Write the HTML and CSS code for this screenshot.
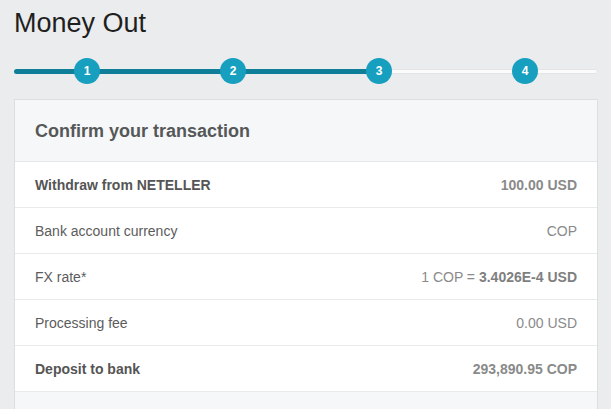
FILE: index.html
```html
<!DOCTYPE html>
<html lang="en">
<head>
  <meta charset="UTF-8">
  <title>Money Out</title>
  <link rel="stylesheet" href="styles.css">
</head>
<body>
  <div class="page">
    <h1 class="title">Money Out</h1>

    <div class="steps">
      <div class="track"><div class="track-fill"></div></div>
      <div class="step-list">
        <div class="step"><span class="dot">1</span></div>
        <div class="step"><span class="dot">2</span></div>
        <div class="step"><span class="dot">3</span></div>
        <div class="step"><span class="dot">4</span></div>
      </div>
    </div>

    <div class="card">
      <div class="card-header">Confirm your transaction</div>
      <div class="row strong">
        <span class="label">Withdraw from NETELLER</span>
        <span class="value">100.00 USD</span>
      </div>
      <div class="row">
        <span class="label">Bank account currency</span>
        <span class="value">COP</span>
      </div>
      <div class="row">
        <span class="label">FX rate*</span>
        <span class="value">1 COP = <b>3.4026E-4 USD</b></span>
      </div>
      <div class="row">
        <span class="label">Processing fee</span>
        <span class="value">0.00 USD</span>
      </div>
      <div class="row strong">
        <span class="label">Deposit to bank</span>
        <span class="value">293,890.95 COP</span>
      </div>
      <div class="card-footer"></div>
    </div>
  </div>
</body>
</html>
```

FILE: styles.css
```css
body {
  margin: 0;
  font-family: "Liberation Sans", Arial, sans-serif;
  background-color: #ebeced;
  color: #222;
  overflow: hidden;
}
.page {
  padding: 0 13px 0 14px;
}
.title {
  margin: 0;
  padding-top: 8px;
  font-size: 27px;
  font-weight: normal;
  line-height: 30px;
  color: #1f1f1f;
}
.steps {
  position: relative;
  margin-top: 20px;
  height: 26px;
}
.track {
  position: absolute;
  left: 0;
  right: 0;
  top: 11px;
  height: 5px;
  border-radius: 3px;
  background: #fbfbfb;
  box-shadow: inset 0 0 0 1px #e2e4e5;
}
.track-fill {
  width: 62.5%;
  height: 100%;
  border-radius: 3px 0 0 3px;
  background: #0f7e98;
}
.step-list {
  position: relative;
  display: grid;
  grid-template-columns: repeat(4, 1fr);
}
.step {
  display: flex;
  justify-content: center;
}
.dot {
  width: 26px;
  height: 26px;
  border-radius: 50%;
  background: #179fc0;
  color: #fff;
  font-size: 12px;
  font-weight: bold;
  line-height: 26px;
  text-align: center;
}
.card {
  margin-top: 15px;
  background: #fff;
  border: 1px solid #dcdedf;
  border-bottom: none;
}
.card-header {
  height: 61px;
  line-height: 62px;
  padding: 0 20px;
  background: #f6f7f8;
  border-bottom: 1px solid #e6e7e8;
  font-size: 18px;
  font-weight: bold;
  color: #555759;
}
.row {
  display: flex;
  justify-content: space-between;
  align-items: center;
  height: 45px;
  padding: 0 20px;
  border-bottom: 1px solid #e9eaeb;
  font-size: 14px;
}
.label {
  color: #5c5c5c;
}
.value {
  color: #8a8a8a;
}
.value b {
  color: #7f7f7f;
}
.strong .label,
.strong .value {
  font-weight: bold;
}
.strong .label {
  color: #555;
}
.card-footer {
  height: 18px;
  background: #f6f7f8;
}
```
